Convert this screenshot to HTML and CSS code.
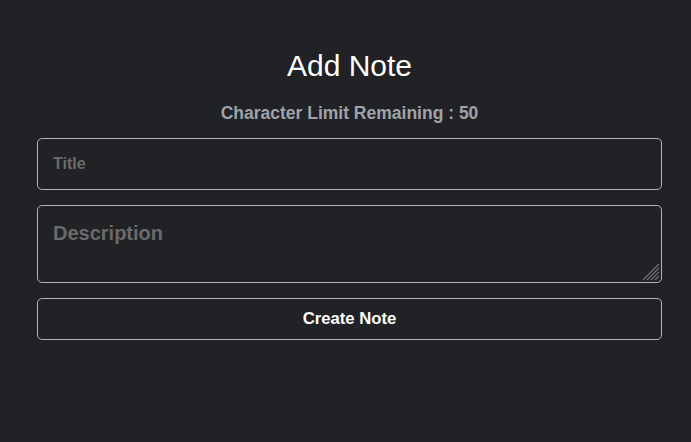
FILE: index.html
```html
<!DOCTYPE html>
<html>
<head>
<meta charset="utf-8">
<link rel="stylesheet" href="styles.css">
</head>
<body>
<div class="wrap">
  <h1 class="heading">Add Note</h1>
  <p class="limit">Character Limit Remaining : 50</p>
  <form class="form">
    <input class="field title" type="text" placeholder="Title">
    <div class="desc-wrap">
      <textarea class="field desc" placeholder="Description"></textarea>
      <svg class="grip" width="18" height="18" viewBox="0 0 18 18" aria-hidden="true">
        <path d="M17 1 L1 17 M17 5 L5 17 M17 9 L9 17 M17 13 L13 17" stroke="#6e6e6e" stroke-width="1.3" fill="none"/>
      </svg>
    </div>
    <button class="btn" type="button">Create Note</button>
  </form>
</div>
</body>
</html>
```
FILE: styles.css
```css
html, body {
  margin: 0;
  padding: 0;
  background: #212226;
  height: 100%;
}
body {
  font-family: "Liberation Sans", Arial, sans-serif;
  color: #fff;
  color-scheme: dark;
}
.wrap {
  padding: 48px 29px 0 37px;
  display: flex;
  flex-direction: column;
}
.heading {
  margin: 0;
  text-align: center;
  font-weight: 400;
  font-size: 30px;
  line-height: 36px;
}
.limit {
  margin: 19px 0 0;
  text-align: center;
  font-weight: 700;
  font-size: 17.5px;
  line-height: 20px;
  color: #9fa3a8;
}
.form {
  margin-top: 15px;
  display: flex;
  flex-direction: column;
  gap: 15px;
}
.field {
  box-sizing: border-box;
  width: 100%;
  background: transparent;
  border: 1px solid #b5b5b5;
  border-radius: 5px;
  color: #fff;
  font-family: "Liberation Sans", Arial, sans-serif;
  font-weight: 700;
  padding: 0 15px;
  outline: none;
}
.field::placeholder {
  color: #6a6a6a;
}
.title {
  height: 52px;
  font-size: 16px;
}
.desc-wrap {
  position: relative;
}
.desc {
  height: 78px;
  font-size: 20px;
  padding-top: 16px;
  resize: none;
  display: block;
}
.grip {
  position: absolute;
  right: 2px;
  bottom: 2px;
  pointer-events: none;
}
.btn {
  height: 42px;
  background: transparent;
  border: 1px solid #b5b5b5;
  border-radius: 5px;
  color: #fff;
  font-family: "Liberation Sans", Arial, sans-serif;
  font-weight: 700;
  font-size: 16.7px;
}
```
